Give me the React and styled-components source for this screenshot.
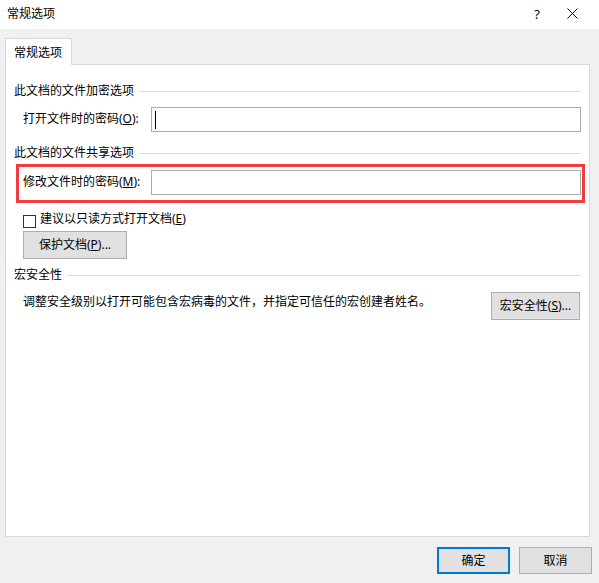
import React from 'react'
import styled, { createGlobalStyle } from 'styled-components'

const GlobalStyle = createGlobalStyle`
  html, body {
    margin: 0;
    padding: 0;
    background: #f0f0f0;
  }
  body {
    font-family: "Noto Sans", "Noto Sans CJK SC", sans-serif;
    font-size: 12px;
    color: #000;
  }
`

const Window = styled.div`
  width: 599px;
  height: 583px;
  display: flex;
  flex-direction: column;
  background: #f0f0f0;
  overflow: hidden;
`

const TitleBar = styled.div`
  height: 29px;
  flex-shrink: 0;
  display: flex;
  align-items: center;
  background: #fff;
  padding-left: 7px;
  padding-bottom: 2px;
  box-sizing: border-box;
`

const TitleText = styled.div`
  flex: 1;
  line-height: 16px;
`

const TitleButton = styled.div`
  width: ${({ $w }) => $w}px;
  display: flex;
  justify-content: center;
  align-items: center;
  font-size: 13px;
  line-height: 16px;
`

const Body = styled.div`
  flex: 1;
  display: flex;
  flex-direction: column;
  padding: 9px 9px 0 5px;
`

const TabStrip = styled.div`
  display: flex;
  height: 26px;
  position: relative;
  z-index: 1;
`

const Tab = styled.div`
  width: 67px;
  height: 27px;
  box-sizing: border-box;
  border: 1px solid #d9d9d9;
  border-bottom: none;
  background: #fff;
  padding: 6px 0 0 8px;
  line-height: 16px;
`

const Panel = styled.div`
  height: 473px;
  box-sizing: border-box;
  border: 1px solid #d9d9d9;
  background: #fff;
  padding: 18px 8px 0 8px;
  display: flex;
  flex-direction: column;
`

const SectionHeader = styled.div`
  display: flex;
  align-items: center;
  height: 16px;
  line-height: 16px;
  margin-top: ${({ $mt }) => $mt || 0}px;

  &::after {
    content: '';
    flex: 1;
    height: 1px;
    background: #dcdcdc;
    margin-left: 5px;
  }
`

const FieldRow = styled.div`
  position: relative;
  display: flex;
  align-items: center;
  padding-left: 9px;
  margin-top: ${({ $mt }) => $mt || 0}px;

  ${({ $highlight }) =>
    $highlight &&
    `
    &::after {
      content: '';
      position: absolute;
      top: -6px;
      bottom: -8px;
      left: 2px;
      right: -4px;
      border: 3px solid #f03c3c;
      pointer-events: none;
    }
  `}
`

const Label = styled.div`
  width: 128px;
  flex-shrink: 0;
  line-height: 16px;
  padding-bottom: 1px;
`

const TextBox = styled.div`
  flex: 1;
  height: 25px;
  box-sizing: border-box;
  border: 1px solid #ababab;
  background: #fff;
  display: flex;
  align-items: center;
  padding-left: 3px;
`

const Caret = styled.div`
  width: 1px;
  height: 18px;
  background: #000;
`

const CheckRow = styled.div`
  display: flex;
  align-items: center;
  height: 16px;
  padding-left: 9px;
  margin-top: 16px;
  gap: 4px;
`

const CheckBox = styled.div`
  width: 13px;
  height: 13px;
  box-sizing: border-box;
  border: 1px solid #333;
  background: #fff;
  margin-top: 4px;
`

const CheckLabel = styled.div`
  line-height: 16px;
`

const Button = styled.div`
  width: ${({ $w }) => $w}px;
  height: ${({ $h }) => $h || 28}px;
  box-sizing: border-box;
  border: ${({ $default }) => ($default ? '2px solid #0078d7' : '1px solid #adadad')};
  background: #e1e1e1;
  display: flex;
  align-items: center;
  justify-content: center;
  line-height: 16px;
  flex-shrink: 0;
`

const ButtonRow = styled.div`
  padding-left: 9px;
  margin-top: ${({ $mt }) => $mt || 0}px;
`

const MacroRow = styled.div`
  display: flex;
  align-items: flex-start;
  justify-content: space-between;
  padding-left: 9px;
  padding-right: 1px;
  margin-top: 9px;
`

const MacroText = styled.div`
  line-height: 16px;
  margin-top: 2px;
`

const Footer = styled.div`
  display: flex;
  justify-content: flex-end;
  gap: 9px;
  margin-top: 10px;
  margin-right: -2px;
`

const CloseIcon = () => (
  <svg width="11" height="11" viewBox="0 0 11 11">
    <path d="M0.5 0.5 L10.5 10.5 M10.5 0.5 L0.5 10.5" stroke="#000" strokeWidth="1" fill="none" />
  </svg>
)

const App = () => {
  return (
    <>
      <GlobalStyle />
      <Window>
        <TitleBar>
          <TitleText>常规选项</TitleText>
          <TitleButton $w={16}>?</TitleButton>
          <TitleButton $w={54}>
            <CloseIcon />
          </TitleButton>
        </TitleBar>
        <Body>
          <TabStrip>
            <Tab>常规选项</Tab>
          </TabStrip>
          <Panel>
            <SectionHeader>此文档的文件加密选项</SectionHeader>
            <FieldRow $mt={8}>
              <Label>
                打开文件时的密码(<u>O</u>):
              </Label>
              <TextBox>
                <Caret />
              </TextBox>
            </FieldRow>

            <SectionHeader $mt={13}>此文档的文件共享选项</SectionHeader>
            <FieldRow $mt={9} $highlight>
              <Label>
                修改文件时的密码(<u>M</u>):
              </Label>
              <TextBox />
            </FieldRow>

            <CheckRow>
              <CheckBox />
              <CheckLabel>
                建议以只读方式打开文档(<u>E</u>)
              </CheckLabel>
            </CheckRow>
            <ButtonRow $mt={4}>
              <Button $w={104}>
                保护文档(<u>P</u>)...
              </Button>
            </ButtonRow>

            <SectionHeader $mt={8}>宏安全性</SectionHeader>
            <MacroRow>
              <MacroText>调整安全级别以打开可能包含宏病毒的文件，并指定可信任的宏创建者姓名。</MacroText>
              <Button $w={89}>
                宏安全性(<u>S</u>)...
              </Button>
            </MacroRow>
          </Panel>
          <Footer>
            <Button $w={73} $h={27} $default>
              确定
            </Button>
            <Button $w={73} $h={27}>
              取消
            </Button>
          </Footer>
        </Body>
      </Window>
    </>
  )
}

export default App
